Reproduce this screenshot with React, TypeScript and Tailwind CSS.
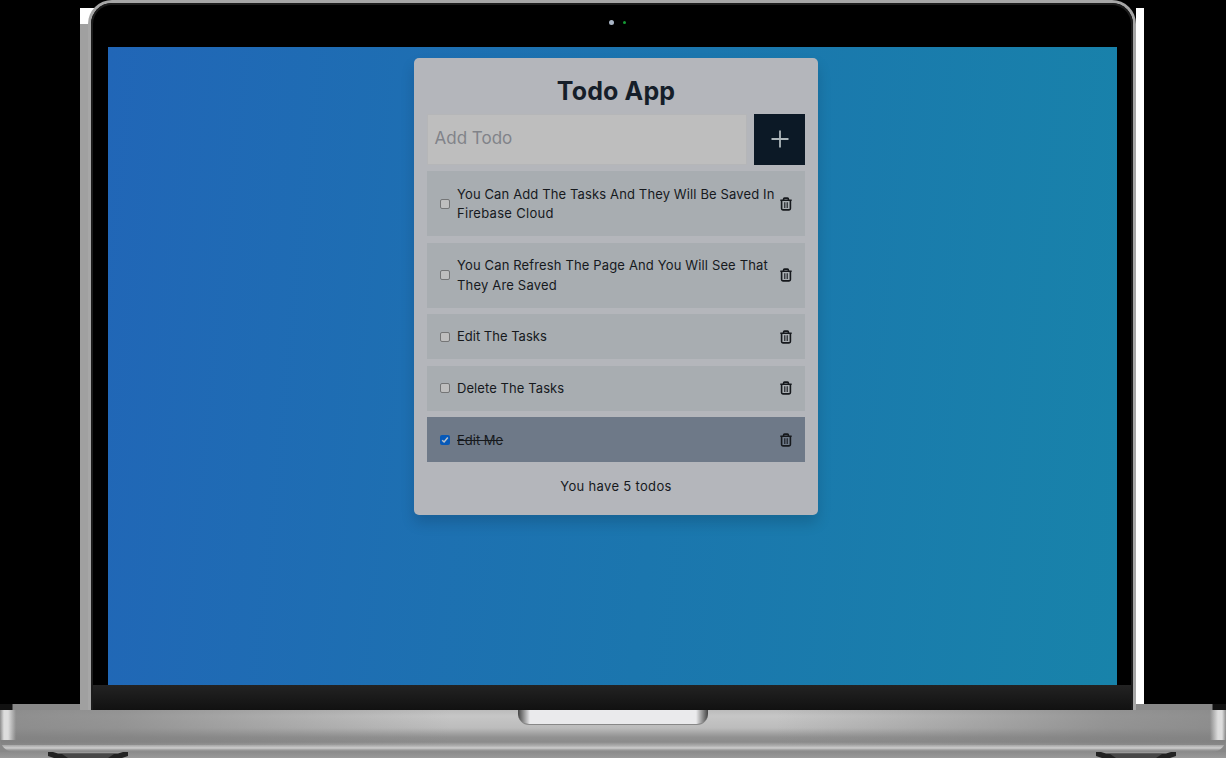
import React from "react";

function Trash() {
  return (
    <svg width="12" height="14" viewBox="0 0 12 14" fill="none" stroke="#16191d" strokeWidth="1.6" className="shrink-0">
      <path d="M0.3 3.2H11.7M3.6 3V2Q3.6 1.1 4.5 1.1H7.5Q8.4 1.1 8.4 2V3M1.6 3.3V11.6Q1.6 12.9 2.9 12.9H9.1Q10.4 12.9 10.4 11.6V3.3" />
      <path d="M4.8 5.2V11M7.2 5.2V11" strokeWidth="1.1" />
    </svg>
  );
}

function Checkbox({ on }: { on?: boolean }) {
  return on ? (
    <span className="flex size-[10px] shrink-0 items-center justify-center rounded-[2px] bg-[#0759b8]">
      <svg width="8" height="8" viewBox="0 0 8 8" fill="none" stroke="#bfc4ca" strokeWidth="1.5"><path d="M1.2 4.2L3.1 6L6.8 1.6" /></svg>
    </span>
  ) : (
    <span className="size-[10px] shrink-0 rounded-[2px] border border-[#747576] bg-[#bebebe]" />
  );
}

type Line = { text: string; track: string };
const rows: { lines: Line[]; height: string; done?: boolean }[] = [
  { height: "h-[65px]", lines: [{ text: "You Can Add The Tasks And They Will Be Saved In", track: "tracking-[0.13px]" }, { text: "Firebase Cloud", track: "tracking-[0.29px]" }] },
  { height: "h-[65px]", lines: [{ text: "You Can Refresh The Page And You Will See That", track: "tracking-[0.145px]" }, { text: "They Are Saved", track: "tracking-[0.18px]" }] },
  { height: "h-[45px]", lines: [{ text: "Edit The Tasks", track: "tracking-[0px]" }] },
  { height: "h-[45px]", lines: [{ text: "Delete The Tasks", track: "tracking-[0.08px]" }] },
  { height: "h-[45px]", done: true, lines: [{ text: "Edit Me", track: "tracking-[0px]" }] },
];

function TodoCard() {
  return (
    <main className="mt-[11px] ml-[306px] flex h-[457px] w-[404px] flex-col rounded-[5px] bg-[#b4b6bb] px-[13px] pt-[17px] text-[#16191d] shadow-[0_8px_14px_rgba(0,0,0,0.15)]">
      <h1 className="h-[38.5px] text-center text-[25px] leading-[33px] font-bold tracking-[0.15px] text-[#151e29]">Todo App</h1>
      <div className="flex h-[51px] gap-[7px]">
        <div className="flex w-[320px] items-center border border-[#b5b6b8] bg-[#bebebe] pl-[6.5px] text-[17px] text-[#818389]">Add Todo</div>
        <button aria-label="Add todo" className="flex w-[51px] items-center justify-center bg-[#0c1926]">
          <svg width="18" height="18" viewBox="0 0 18 18" stroke="#aeb7bb" strokeWidth="1.8"><path d="M9 0.5V17.5M0.5 9H17.5" /></svg>
        </button>
      </div>
      <ul className="mt-[6.5px] flex flex-col gap-[6.6px]">
        {rows.map((r) => (
          <li key={r.lines[0].text} className={`flex shrink-0 items-center pr-[13px] pl-[13px] ${r.height} ${r.done ? "bg-[#6e7988]" : "bg-[#a8adb1]"}`}>
            <Checkbox on={r.done} />
            <div className={`ml-[7px] grow pt-px text-[13px] leading-[19.5px] whitespace-nowrap ${r.done ? "line-through" : ""}`}>
              {r.lines.map((l) => <div key={l.text}><span className={l.track}>{l.text}</span></div>)}
            </div>
            <Trash />
          </li>
        ))}
      </ul>
      <p className="mt-[13.5px] text-center text-[13px] leading-[20px] tracking-[0.33px]">You have 5 todos</p>
    </main>
  );
}

function Foot() {
  return (
    <svg width="80" height="6" viewBox="0 0 80 6">
      <path d="M0 0H80V4L74 6H6L0 4Z" fill="#222" />
      <path d="M5 0H75L70 1.5H10Z" fill="#999" />
      <path d="M14 2H66L60 6H20Z" fill="#484848" />
    </svg>
  );
}

export default function App() {
  return (
    <div className="flex h-[758px] w-[1226px] flex-col overflow-hidden bg-black font-['Inter',sans-serif]">
      <div className="flex h-[710px] shrink-0">
        <div className="flex w-[80px] flex-col justify-end">
          <div className="h-[6px] bg-[linear-gradient(90deg,#111_0_12px,#888_13px)]" />
        </div>
        <div className="w-[16px] shrink-0 bg-[linear-gradient(#000_0_8px,#fff_8px_24px,#a0a0a0_24px)]" />
        <div className="-ml-[8px] w-[1048px] rounded-t-[24px] border-x-[3px] border-t-[3px] border-[#a6a6a6] bg-black">
          <div className="flex h-[707px] flex-col rounded-t-[21px] border-x-2 border-t-2 border-[#1c1c1c]">
            <div className="flex h-[42px] shrink-0 items-center justify-center gap-[9px] pb-[7px] pl-[10px]">
              <span className="size-[5px] rounded-full bg-[#a9b5c6]" />
              <span className="size-[3px] rounded-full bg-[#159a35]" />
            </div>
            <div className="ml-[15px] flex h-[638px] w-[1009px] shrink-0 items-start bg-[linear-gradient(96deg,#2166b7,#1b76ae_55%,#1883aa)]"><TodoCard /></div>
            <div className="grow bg-linear-to-b from-[#232323] to-[#111]" />
          </div>
        </div>
        <div className="h-[710px] w-[8px] bg-[linear-gradient(#000_0_8px,#fff_8px_704px,#888_704px)]" />
        <div className="flex grow flex-col justify-end">
          <div className="h-[6px] bg-[linear-gradient(90deg,#888_0_68px,#111_69px)]" />
        </div>
      </div>
      <div className="bg-[#888]">
        <div className="flex h-[42px] justify-center rounded-b-[14px] bg-[linear-gradient(90deg,#ddd0_0,#ddd_4px,#ddd_8px,#ddd0_16px,#ddd0_1210px,#ddd_1218px,#ddd_1222px,#ddd0_1226px),linear-gradient(90deg,#808080cc,#808080b0_120px,#80808000_450px,#80808000_776px,#808080b0_1106px,#808080cc),linear-gradient(#bbb_0,#c6c6c6_6px,#bcbcbc_18px,#929292_27px,#8b8b8b_32px,#b0b0b0_36px,#cdcdcd_38px,#999_40px,#888_42px)] bg-[length:100%_30px,100%_35px,100%_100%] bg-no-repeat">
          <div className="h-[15px] w-[190px] rounded-b-[11px] border-b border-[#888] bg-[linear-gradient(90deg,#444_0,#888_5px,#eaeaec_12px,#eaeaec_178px,#888_185px,#444)]" />
        </div>
      </div>
      <div className="flex h-[6px] justify-between bg-[linear-gradient(#8b8b8b,#999)] pr-[50px] pl-[48px]">
        <Foot /><Foot />
      </div>
    </div>
  );
}
